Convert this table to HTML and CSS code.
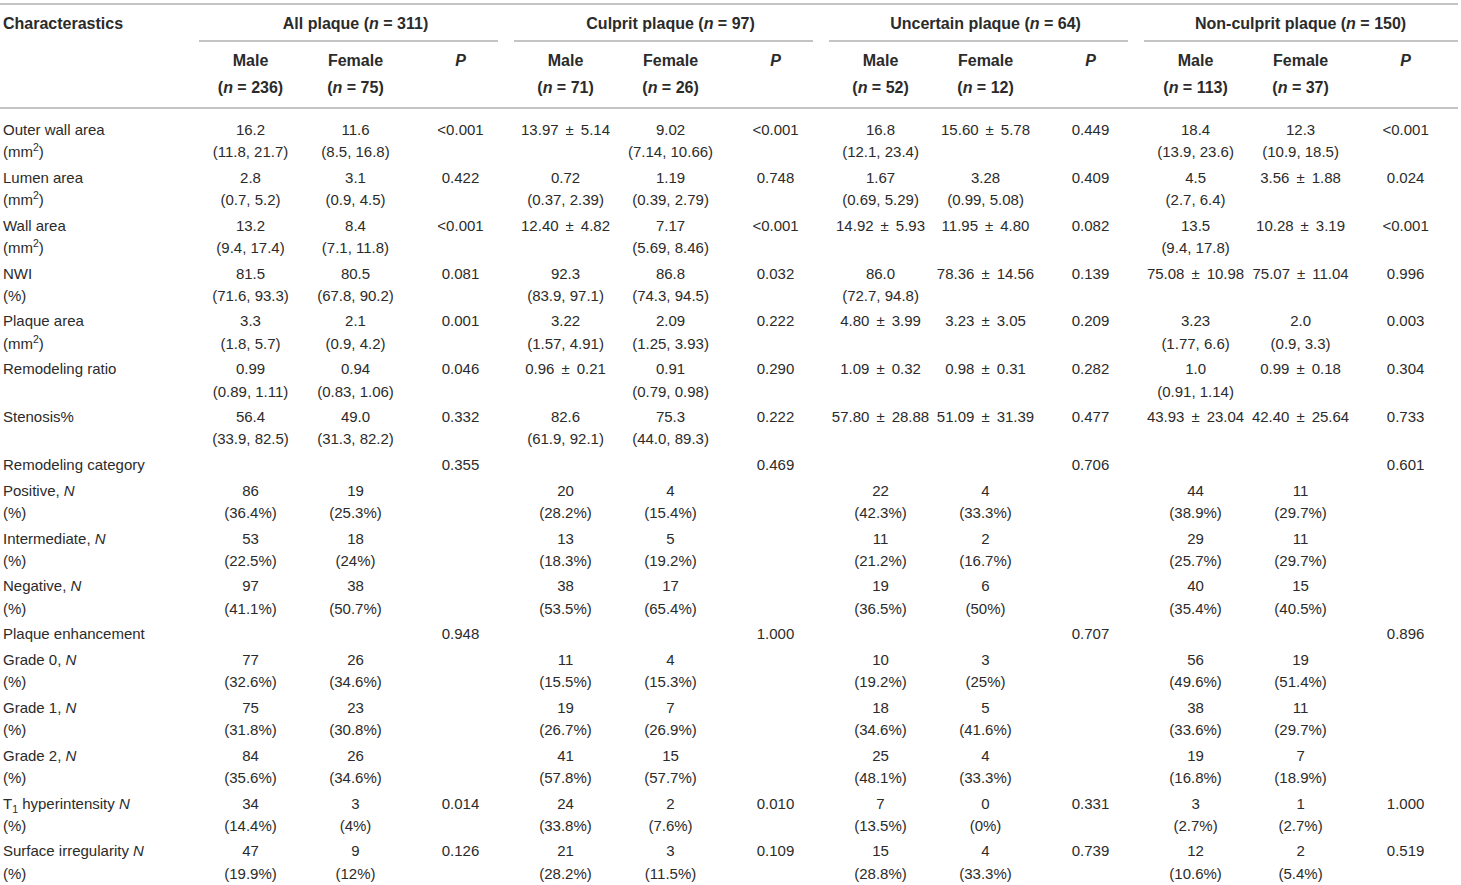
FILE: index.html
```html
<!DOCTYPE html>
<html lang="en">
<head>
    <meta charset="UTF-8">
    <meta name="viewport" content="width=device-width, initial-scale=1.0">
    <title>Plaque characteristics by sex</title>
    <link rel="stylesheet" href="styles.css">
</head>
<body>

<table class="stats">
    <colgroup>
        <col class="col-label">
        <col class="col-val"><col class="col-val"><col class="col-val">
        <col class="col-val"><col class="col-val"><col class="col-val">
        <col class="col-val"><col class="col-val"><col class="col-val">
        <col class="col-val"><col class="col-val"><col class="col-val">
    </colgroup>
    <thead>
        <tr class="groups">
            <th class="char" rowspan="2">Characterastics</th>
            <th colspan="3"><div class="group-title">All plaque (<i>n</i> = 311)</div><div class="group-rule"></div></th>
            <th colspan="3"><div class="group-title">Culprit plaque (<i>n</i> = 97)</div><div class="group-rule"></div></th>
            <th colspan="3"><div class="group-title">Uncertain plaque (<i>n</i> = 64)</div><div class="group-rule"></div></th>
            <th colspan="3"><div class="group-title">Non-culprit plaque (<i>n</i> = 150)</div><div class="group-rule last"></div></th>
        </tr>
        <tr class="sub">
            <th>Male<br>(<i>n</i> = 236)</th>
            <th>Female<br>(<i>n</i> = 75)</th>
            <th><i>P</i></th>
            <th>Male<br>(<i>n</i> = 71)</th>
            <th>Female<br>(<i>n</i> = 26)</th>
            <th><i>P</i></th>
            <th>Male<br>(<i>n</i> = 52)</th>
            <th>Female<br>(<i>n</i> = 12)</th>
            <th><i>P</i></th>
            <th>Male<br>(<i>n</i> = 113)</th>
            <th>Female<br>(<i>n</i> = 37)</th>
            <th><i>P</i></th>
        </tr>
    </thead>
    <tbody>
        <tr>
            <td class="label">Outer wall area<br>(mm<sup>2</sup>)</td>
            <td>16.2<br>(11.8, 21.7)</td><td>11.6<br>(8.5, 16.8)</td><td>&lt;0.001</td>
            <td>13.97<span class="pm">±</span>5.14</td><td>9.02<br>(7.14, 10.66)</td><td>&lt;0.001</td>
            <td>16.8<br>(12.1, 23.4)</td><td>15.60<span class="pm">±</span>5.78</td><td>0.449</td>
            <td>18.4<br>(13.9, 23.6)</td><td>12.3<br>(10.9, 18.5)</td><td>&lt;0.001</td>
        </tr>
        <tr>
            <td class="label">Lumen area<br>(mm<sup>2</sup>)</td>
            <td>2.8<br>(0.7, 5.2)</td><td>3.1<br>(0.9, 4.5)</td><td>0.422</td>
            <td>0.72<br>(0.37, 2.39)</td><td>1.19<br>(0.39, 2.79)</td><td>0.748</td>
            <td>1.67<br>(0.69, 5.29)</td><td>3.28<br>(0.99, 5.08)</td><td>0.409</td>
            <td>4.5<br>(2.7, 6.4)</td><td>3.56<span class="pm">±</span>1.88</td><td>0.024</td>
        </tr>
        <tr>
            <td class="label">Wall area<br>(mm<sup>2</sup>)</td>
            <td>13.2<br>(9.4, 17.4)</td><td>8.4<br>(7.1, 11.8)</td><td>&lt;0.001</td>
            <td>12.40<span class="pm">±</span>4.82</td><td>7.17<br>(5.69, 8.46)</td><td>&lt;0.001</td>
            <td>14.92<span class="pm">±</span>5.93</td><td>11.95<span class="pm">±</span>4.80</td><td>0.082</td>
            <td>13.5<br>(9.4, 17.8)</td><td>10.28<span class="pm">±</span>3.19</td><td>&lt;0.001</td>
        </tr>
        <tr>
            <td class="label">NWI<br>(%)</td>
            <td>81.5<br>(71.6, 93.3)</td><td>80.5<br>(67.8, 90.2)</td><td>0.081</td>
            <td>92.3<br>(83.9, 97.1)</td><td>86.8<br>(74.3, 94.5)</td><td>0.032</td>
            <td>86.0<br>(72.7, 94.8)</td><td>78.36<span class="pm">±</span>14.56</td><td>0.139</td>
            <td>75.08<span class="pm">±</span>10.98</td><td>75.07<span class="pm">±</span>11.04</td><td>0.996</td>
        </tr>
        <tr>
            <td class="label">Plaque area<br>(mm<sup>2</sup>)</td>
            <td>3.3<br>(1.8, 5.7)</td><td>2.1<br>(0.9, 4.2)</td><td>0.001</td>
            <td>3.22<br>(1.57, 4.91)</td><td>2.09<br>(1.25, 3.93)</td><td>0.222</td>
            <td>4.80<span class="pm">±</span>3.99</td><td>3.23<span class="pm">±</span>3.05</td><td>0.209</td>
            <td>3.23<br>(1.77, 6.6)</td><td>2.0<br>(0.9, 3.3)</td><td>0.003</td>
        </tr>
        <tr>
            <td class="label">Remodeling ratio</td>
            <td>0.99<br>(0.89, 1.11)</td><td>0.94<br>(0.83, 1.06)</td><td>0.046</td>
            <td>0.96<span class="pm">±</span>0.21</td><td>0.91<br>(0.79, 0.98)</td><td>0.290</td>
            <td>1.09<span class="pm">±</span>0.32</td><td>0.98<span class="pm">±</span>0.31</td><td>0.282</td>
            <td>1.0<br>(0.91, 1.14)</td><td>0.99<span class="pm">±</span>0.18</td><td>0.304</td>
        </tr>
        <tr>
            <td class="label">Stenosis%</td>
            <td>56.4<br>(33.9, 82.5)</td><td>49.0<br>(31.3, 82.2)</td><td>0.332</td>
            <td>82.6<br>(61.9, 92.1)</td><td>75.3<br>(44.0, 89.3)</td><td>0.222</td>
            <td>57.80<span class="pm">±</span>28.88</td><td>51.09<span class="pm">±</span>31.39</td><td>0.477</td>
            <td>43.93<span class="pm">±</span>23.04</td><td>42.40<span class="pm">±</span>25.64</td><td>0.733</td>
        </tr>
        <tr>
            <td class="label">Remodeling category</td>
            <td></td><td></td><td>0.355</td>
            <td></td><td></td><td>0.469</td>
            <td></td><td></td><td>0.706</td>
            <td></td><td></td><td>0.601</td>
        </tr>
        <tr>
            <td class="label">Positive, <i>N</i><br>(%)</td>
            <td>86<br>(36.4%)</td><td>19<br>(25.3%)</td><td></td>
            <td>20<br>(28.2%)</td><td>4<br>(15.4%)</td><td></td>
            <td>22<br>(42.3%)</td><td>4<br>(33.3%)</td><td></td>
            <td>44<br>(38.9%)</td><td>11<br>(29.7%)</td><td></td>
        </tr>
        <tr>
            <td class="label">Intermediate, <i>N</i><br>(%)</td>
            <td>53<br>(22.5%)</td><td>18<br>(24%)</td><td></td>
            <td>13<br>(18.3%)</td><td>5<br>(19.2%)</td><td></td>
            <td>11<br>(21.2%)</td><td>2<br>(16.7%)</td><td></td>
            <td>29<br>(25.7%)</td><td>11<br>(29.7%)</td><td></td>
        </tr>
        <tr>
            <td class="label">Negative, <i>N</i><br>(%)</td>
            <td>97<br>(41.1%)</td><td>38<br>(50.7%)</td><td></td>
            <td>38<br>(53.5%)</td><td>17<br>(65.4%)</td><td></td>
            <td>19<br>(36.5%)</td><td>6<br>(50%)</td><td></td>
            <td>40<br>(35.4%)</td><td>15<br>(40.5%)</td><td></td>
        </tr>
        <tr>
            <td class="label">Plaque enhancement</td>
            <td></td><td></td><td>0.948</td>
            <td></td><td></td><td>1.000</td>
            <td></td><td></td><td>0.707</td>
            <td></td><td></td><td>0.896</td>
        </tr>
        <tr>
            <td class="label">Grade 0, <i>N</i><br>(%)</td>
            <td>77<br>(32.6%)</td><td>26<br>(34.6%)</td><td></td>
            <td>11<br>(15.5%)</td><td>4<br>(15.3%)</td><td></td>
            <td>10<br>(19.2%)</td><td>3<br>(25%)</td><td></td>
            <td>56<br>(49.6%)</td><td>19<br>(51.4%)</td><td></td>
        </tr>
        <tr>
            <td class="label">Grade 1, <i>N</i><br>(%)</td>
            <td>75<br>(31.8%)</td><td>23<br>(30.8%)</td><td></td>
            <td>19<br>(26.7%)</td><td>7<br>(26.9%)</td><td></td>
            <td>18<br>(34.6%)</td><td>5<br>(41.6%)</td><td></td>
            <td>38<br>(33.6%)</td><td>11<br>(29.7%)</td><td></td>
        </tr>
        <tr>
            <td class="label">Grade 2, <i>N</i><br>(%)</td>
            <td>84<br>(35.6%)</td><td>26<br>(34.6%)</td><td></td>
            <td>41<br>(57.8%)</td><td>15<br>(57.7%)</td><td></td>
            <td>25<br>(48.1%)</td><td>4<br>(33.3%)</td><td></td>
            <td>19<br>(16.8%)</td><td>7<br>(18.9%)</td><td></td>
        </tr>
        <tr>
            <td class="label">T<sub>1</sub> hyperintensity <i>N</i><br>(%)</td>
            <td>34<br>(14.4%)</td><td>3<br>(4%)</td><td>0.014</td>
            <td>24<br>(33.8%)</td><td>2<br>(7.6%)</td><td>0.010</td>
            <td>7<br>(13.5%)</td><td>0<br>(0%)</td><td>0.331</td>
            <td>3<br>(2.7%)</td><td>1<br>(2.7%)</td><td>1.000</td>
        </tr>
        <tr>
            <td class="label">Surface irregularity <i>N</i><br>(%)</td>
            <td>47<br>(19.9%)</td><td>9<br>(12%)</td><td>0.126</td>
            <td>21<br>(28.2%)</td><td>3<br>(11.5%)</td><td>0.109</td>
            <td>15<br>(28.8%)</td><td>4<br>(33.3%)</td><td>0.739</td>
            <td>12<br>(10.6%)</td><td>2<br>(5.4%)</td><td>0.519</td>
        </tr>
    </tbody>
</table>

</body>
</html>
```
FILE: styles.css
```css
body {
    margin: 0;
    font-family: "Liberation Sans", Arial, sans-serif;
    font-size: 15px;
    color: #2b2b2b;
    background-color: #fff;
}
.stats {
    border-collapse: collapse;
    table-layout: fixed;
    width: 1458px;
    margin-top: 3px;
    border-top: 2px solid #c4c4c4;
}
.col-label {
    width: 198px;
}
.col-val {
    width: 105px;
}
th,
td {
    padding: 0;
    text-align: center;
    vertical-align: top;
}
thead {
    border-bottom: 2px solid #c4c4c4;
}
thead th {
    font-size: 16px;
    font-weight: bold;
    line-height: 22px;
}
th.char {
    text-align: left;
    padding: 8px 0 0 3px;
}
.groups th {
    padding-top: 8px;
}
.group-rule {
    margin: 5px 15px 0 1px;
    border-top: 2px solid #c4c4c4;
}
.group-rule.last {
    margin-right: 0;
}
.sub th {
    line-height: 27px;
    padding: 4.5px 0 6px;
}
td {
    line-height: 22.25px;
    padding: 1.7px 0;
}
tbody tr:first-child td {
    padding-top: 10.4px;
}
td.label {
    text-align: left;
    padding-left: 3px;
}
/* plus-minus sign gets a little more room than a plain space */
.pm {
    margin: 0 7px;
}
sup,
sub {
    font-size: 0.7em;
    line-height: 0;
}
```
